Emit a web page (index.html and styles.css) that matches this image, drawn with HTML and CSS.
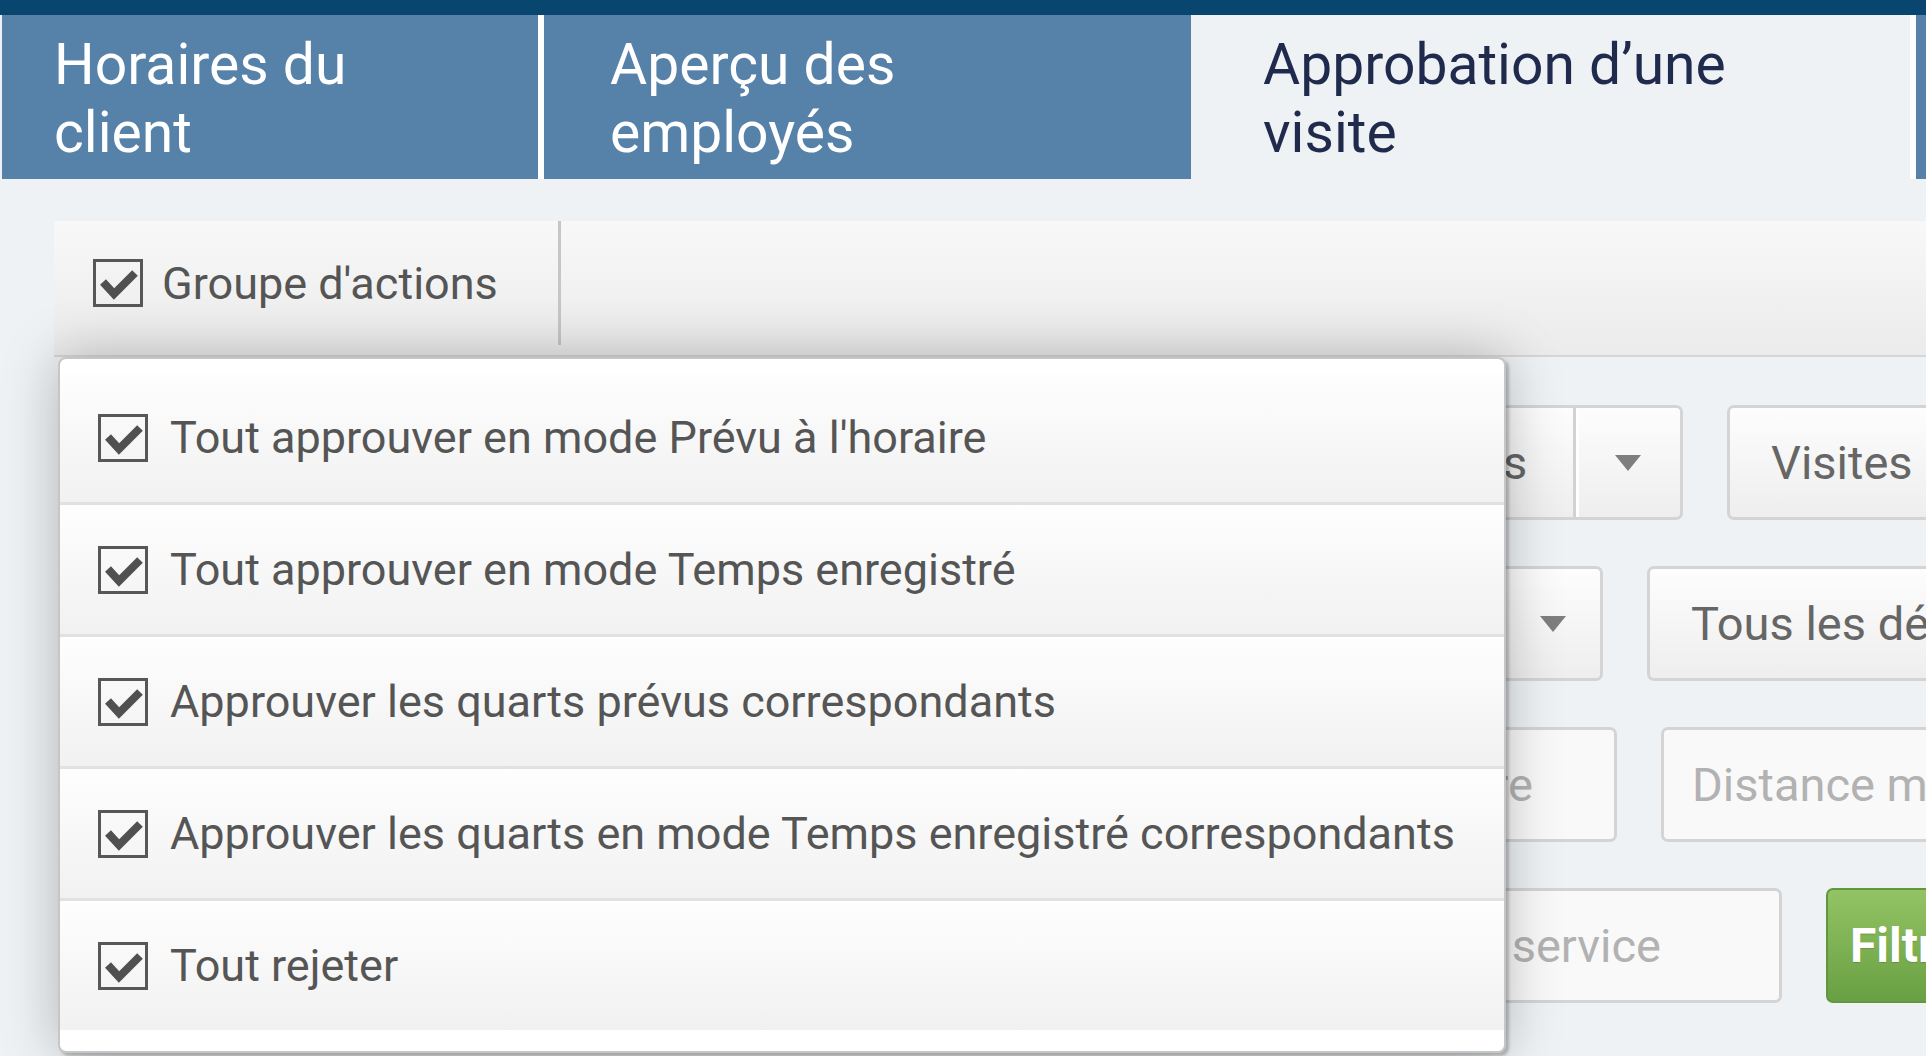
FILE: index.html
```html
<!DOCTYPE html>
<html lang="fr">
<head>
    <meta charset="UTF-8">
    <meta name="viewport" content="width=device-width, initial-scale=1.0">
    <title>Approbation d’une visite</title>
    <link rel="stylesheet" href="styles.css">
</head>
<body>
    <svg class="sprite" xmlns="http://www.w3.org/2000/svg">
        <symbol id="checked" viewBox="0 0 50 48">
            <rect x="1.5" y="1.5" width="47" height="45" fill="none" stroke="#575757" stroke-width="3"/>
            <polyline points="10,23 21,35 42,14" fill="none" stroke="#505050" stroke-width="8"/>
        </symbol>
    </svg>

    <div class="topbar"></div>

    <nav class="tabs">
        <a class="tab tab-client" href="#">Horaires du<br>client</a>
        <a class="tab tab-employees" href="#">Aperçu des<br>employés</a>
        <a class="tab tab-approval active" href="#">Approbation d’une<br>visite</a>
        <a class="tab tab-reports" href="#">Rapports</a>
    </nav>

    <main class="content">
        <div class="actions-bar">
            <div class="actions-toggle">
                <svg class="checkbox"><use href="#checked"/></svg>
                Groupe d'actions
            </div>
            <ul class="actions-menu">
                <li><svg class="checkbox"><use href="#checked"/></svg>Tout approuver en mode Prévu à l'horaire</li>
                <li><svg class="checkbox"><use href="#checked"/></svg>Tout approuver en mode Temps enregistré</li>
                <li><svg class="checkbox"><use href="#checked"/></svg>Approuver les quarts prévus correspondants</li>
                <li><svg class="checkbox"><use href="#checked"/></svg>Approuver les quarts en mode Temps enregistré correspondants</li>
                <li><svg class="checkbox"><use href="#checked"/></svg>Tout rejeter</li>
            </ul>
        </div>

        <form class="filters">
            <div class="filter-row">
                <input class="field w-search" type="text" placeholder="Rechercher une visite">
                <div class="btn-group w-employees">
                    <button type="button" class="btn btn-main">Tous les employés</button>
                    <button type="button" class="btn btn-caret"><span class="caret"></span></button>
                </div>
                <button type="button" class="btn w-wide">Visites approuvées</button>
            </div>
            <div class="filter-row">
                <input class="field w-start" type="text" placeholder="Date de début">
                <button type="button" class="btn btn-select w-clients">Tous les clients<span class="caret"></span></button>
                <button type="button" class="btn w-wide">Tous les départements</button>
            </div>
            <div class="filter-row">
                <input class="field w-end" type="text" placeholder="Date de fin">
                <input class="field w-centre" type="text" placeholder="Code du centre">
                <input class="field w-wide" type="text" placeholder="Distance maximale (km)">
            </div>
            <div class="filter-row">
                <input class="field w-address" type="text" placeholder="Adresse du client">
                <input class="field w-service" type="text" placeholder="Type de service">
                <button type="submit" class="btn btn-primary">Filtrer</button>
            </div>
        </form>
    </main>
</body>
</html>
```

FILE: styles.css
```css
* {
    margin: 0;
    padding: 0;
    box-sizing: border-box;
}

html,
body {
    width: 1926px;
    height: 1056px;
    overflow: hidden;
}

body {
    background: #eef2f5;
    font-family: Roboto, "Liberation Sans", sans-serif;
}

.sprite {
    display: none;
}

.topbar {
    height: 15px;
    background: #08466f;
}

/* tabs */
.tabs {
    display: flex;
    height: 164px;
    padding-left: 2px;
}

.tab {
    flex: none;
    display: flex;
    align-items: center;
    padding: 4px 0 0 66px;
    background: #5681a8;
    color: #fff;
    font-size: 57px;
    line-height: 68px;
    text-decoration: none;
}

.tab + .tab {
    border-left: 6px solid #fff;
}

.tab-client {
    width: 536px;
    padding-left: 52px;
}

.tab-employees {
    width: 653px;
}

.tab-approval {
    width: 719px;
}

.tab-reports {
    width: 400px;
    border-left-color: #e3e8ed;
}

.tab.active {
    background: #eef2f5;
    border-left-color: #eef2f5;
    color: #1f2a4c;
}

/* actions */
.content {
    padding: 42px 0 0 54px;
}

.actions-bar {
    position: relative;
    display: flex;
    width: 1900px;
    height: 136px;
    background: linear-gradient(#f8f8f8, #ebebeb);
    border-bottom: 2px solid #d6d6d6;
}

.checkbox {
    flex: none;
    width: 50px;
    height: 48px;
}

.actions-toggle {
    display: flex;
    align-items: center;
    gap: 19px;
    width: 507px;
    height: 124px;
    padding-left: 39px;
    border-right: 3px solid #c6c6c6;
    font-size: 45px;
    color: #555;
}

.actions-menu {
    position: absolute;
    top: 136px;
    left: 4px;
    z-index: 10;
    width: 1448px;
    padding: 14px 0 21px;
    list-style: none;
    background: #fff;
    border: 2px solid #c6c6c6;
    border-radius: 8px;
    box-shadow: 3px 3px 3px rgba(0, 0, 0, 0.22), 0 0 55px rgba(0, 0, 0, 0.26);
}

.actions-menu li {
    display: flex;
    align-items: center;
    gap: 22px;
    height: 129px;
    padding-left: 38px;
    background: linear-gradient(#fefefe, #f1f1f1);
    font-size: 45px;
    color: #555;
}

.actions-menu li + li {
    height: 132px;
    border-top: 3px solid #e1e1e1;
}

/* filters */
.filters {
    display: flex;
    flex-direction: column;
    gap: 46px;
    padding: 48px 0 0 40px;
}

.filter-row {
    display: flex;
    gap: 44px;
    height: 115px;
}

.field,
.btn {
    flex: none;
    height: 100%;
    border: 3px solid #d4d4d4;
    border-radius: 7px;
    font-family: inherit;
    font-size: 47px;
}

.field {
    padding: 0 28px;
    background: #f9f9f9;
    color: #555;
    outline: none;
}

.field::placeholder {
    color: #b2b2b2;
}

.btn {
    display: flex;
    align-items: center;
    padding: 0 41px;
    background: linear-gradient(#fdfdfd, #eeeeee);
    color: #666;
    text-align: left;
    white-space: nowrap;
}

.btn-group {
    display: flex;
    flex: none;
    height: 100%;
}

.btn-group .btn {
    height: 100%;
}

.btn-main {
    width: 478px;
    border-radius: 7px 0 0 7px;
    border-right: none;
}

.btn-caret {
    width: 110px;
    justify-content: center;
    padding: 0;
    border-radius: 0 7px 7px 0;
    border-left: 3px solid #d2d2d2;
    box-shadow: inset 3px 0 0 #fff;
}

.btn-select {
    justify-content: space-between;
    padding-right: 34px;
}

.caret {
    width: 0;
    height: 0;
    border-left: 13px solid transparent;
    border-right: 13px solid transparent;
    border-top: 16px solid #7e7e7e;
}

.btn-primary {
    width: 200px;
    padding: 0 22px;
    background: linear-gradient(#93c364, #68a043);
    border: 2px solid #62983d;
    color: #fff;
    font-weight: 700;
    font-size: 48px;
    text-shadow: 0 1px 1px rgba(0, 0, 0, 0.15);
}

.w-search { width: 957px; }
.w-start { width: 974px; }
.w-employees { width: 588px; }
.w-clients { width: 491px; }
.w-wide { width: 560px; }
.w-end { width: 1048px; }
.w-centre { width: 431px; }
.w-address { width: 1168px; }
.w-service { width: 476px; }
```
